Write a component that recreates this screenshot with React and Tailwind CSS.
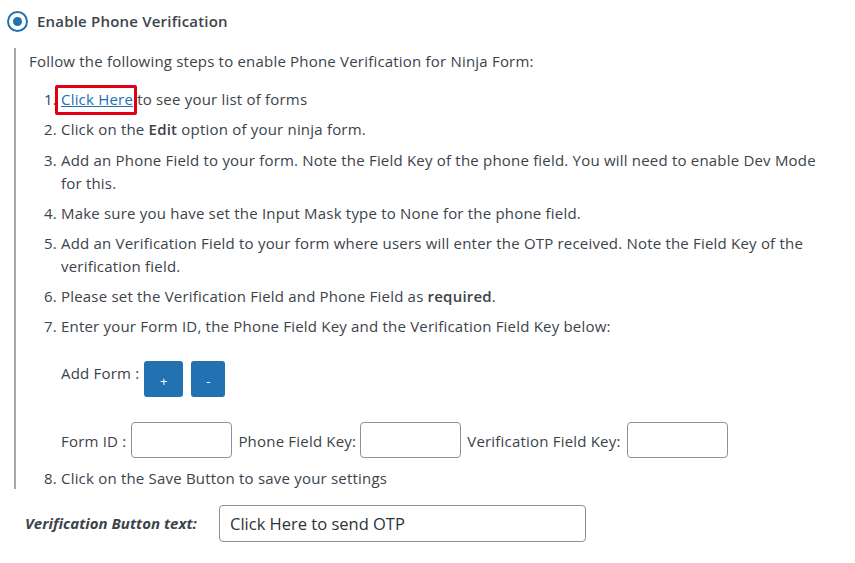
export default function App() {
  const font = { fontFamily: '"Open Sans", "Noto Sans", sans-serif' };
  return (
    <div
      className="bg-white w-[855px] h-[563px] text-[#3c434a] text-[15px] tracking-[0.2px] leading-[23px]"
      style={font}
    >
      {/* header with radio */}
      <div className="flex items-center pt-[10px] pl-[7px] h-[32px]">
        <span className="flex items-center justify-center w-[21px] h-[21px] rounded-full border-2 border-[#2271b1] bg-white">
          <span className="w-[9px] h-[9px] rounded-full bg-[#2271b1]" />
        </span>
        <span className="ml-[9px] font-semibold text-[15px] text-[#3c434a]">
          Enable Phone Verification
        </span>
      </div>

      {/* steps block */}
      <div className="ml-[14px] mt-[16px] border-l-2 border-[#a7aaad] pl-[13px] pt-[2px] h-[441px]">
        <p>Follow the following steps to enable Phone Verification for Ninja Form:</p>

        <ol className="list-decimal pl-[32px] mt-[15px]">
          <li className="mb-[7px]">
            <span className="relative inline-block">
              <a href="#" className="text-[#2271b1] underline">
                Click Here
              </a>
              <span className="absolute -left-[6px] -right-[4px] -top-[3px] -bottom-[4px] border-[3px] border-[#e0000f] rounded-[2px]" />
            </span>{" "}
            to see your list of forms
          </li>
          <li className="mb-[8px]">
            Click on the <b className="font-semibold">Edit</b> option of your ninja form.
          </li>
          <li className="mb-[7px]">
            Add an Phone Field to your form. Note the Field Key of the phone field. You will need to enable Dev Mode
            <br />
            for this.
          </li>
          <li className="mb-[7px]">Make sure you have set the Input Mask type to None for the phone field.</li>
          <li className="mb-[7px]">
            Add an Verification Field to your form where users will enter the OTP received. Note the Field Key of the
            <br />
            verification field.
          </li>
          <li className="mb-[7px]">
            Please set the Verification Field and Phone Field as <b className="font-semibold">required</b>.
          </li>
          <li>
            Enter your Form ID, the Phone Field Key and the Verification Field Key below:
            <div className="flex items-start mt-[23px] h-[36px]">
              <span className="mt-[1px]">Add Form :</span>
              <button className="ml-[5px] w-[39px] h-[36px] rounded-[3px] bg-[#2271b1] text-white text-[13px] pt-[4px]">
                +
              </button>
              <button className="ml-[8px] w-[34px] h-[36px] rounded-[3px] bg-[#2271b1] text-white text-[13px] pt-[4px]">
                -
              </button>
            </div>
            <div className="flex items-center mt-[25px] h-[36px] mb-[9px]">
              <span className="mt-[2px]">Form ID :</span>
              <input className="ml-[5px] w-[101px] h-[36px] rounded-[4px] border border-[#8c8f94] bg-white" />
              <span className="ml-[6px] mt-[2px]">Phone Field Key:</span>
              <input className="ml-[4px] w-[101px] h-[36px] rounded-[4px] border border-[#8c8f94] bg-white" />
              <span className="ml-[6px] mt-[2px]">Verification Field Key:</span>
              <input className="ml-[6px] w-[101px] h-[36px] rounded-[4px] border border-[#8c8f94] bg-white" />
            </div>
          </li>
          <li>Click on the Save Button to save your settings</li>
        </ol>
      </div>

      {/* verification button text row */}
      <div className="flex items-center mt-[16px] pl-[25px]">
        <span className="w-[194px] font-bold italic tracking-normal text-[#3c434a]">Verification Button text:</span>
        <input
          defaultValue="Click Here to send OTP"
          className="w-[367px] h-[37px] rounded-[4px] border border-[#8c8f94] bg-white px-[10px] text-[16.5px] tracking-normal text-[#2c3338]"
          style={font}
        />
      </div>
    </div>
  );
}
